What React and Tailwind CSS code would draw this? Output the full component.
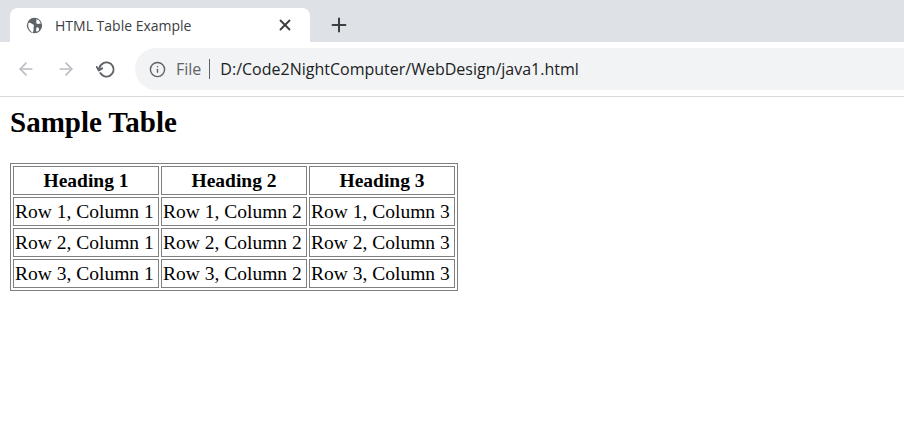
import React from 'react';
import { ArrowLeft, ArrowRight, RotateCw, X, Plus, Info } from 'lucide-react';

const rows = [1, 2, 3];
const cols = [1, 2, 3];

export default function App() {
  return (
    <div className="w-[904px] h-[434px] bg-white overflow-hidden" style={{ fontFamily: '"Open Sans", sans-serif' }}>
      {/* tab strip */}
      <div className="h-[42px] bg-[#dee1e6] flex items-end pl-[10px]">
        <div className="w-[300px] h-[34px] bg-white rounded-t-[8px] flex items-center px-[16px] gap-[12px]">
          <svg width="17" height="17" viewBox="0 0 20 20">
            <circle cx="10" cy="10" r="9" fill="#5f6368" />
            <path d="M3 7 C6 6 7 9 9 9 C10 11 8 12 9 14 C9 16 8 18 8 18.5 C5 17 3 14 2.5 10 Z M12 2.5 C13 5 11 6 13 8 C15 9 16 7 17.5 8 C17 5 15 3 12 2.5 Z M13 12 C15 12 16 14 15 16 C14 17 12 17.5 12 17 C12 15 11.5 13 13 12 Z" fill="white" />
          </svg>
          <span className="text-[14px] text-[#3c4043] flex-1">HTML Table Example</span>
          <X size={18} strokeWidth={2.5} className="text-[#3c4043]" />
        </div>
        <div className="h-[34px] flex items-center ml-[18px]">
          <Plus size={22} strokeWidth={2.2} className="text-[#3c4043]" />
        </div>
      </div>
      {/* toolbar */}
      <div className="h-[55px] bg-white border-b border-[#d7d9dc] flex items-center pl-[16px]">
        <ArrowLeft size={20} className="text-[#b9bcc0]" />
        <ArrowRight size={20} className="text-[#b9bcc0] ml-[20px]" />
        <RotateCw size={19} strokeWidth={2.4} className="text-[#5f6368] ml-[21px] -scale-x-100 rotate-[-30deg]" />
        <div className="ml-[19px] flex-1 h-[42px] bg-[#f1f3f4] rounded-l-full flex items-center pl-[14px]">
          <Info size={17} className="text-[#5f6368]" />
          <span className="ml-[10px] text-[16px] text-[#5f6368]">File</span>
          <span className="ml-[8px] w-px h-[20px] bg-[#5f6368]" />
          <span className="ml-[10px] text-[16px] text-[#202124]">D:/Code2NightComputer/WebDesign/java1.html</span>
        </div>
      </div>
      {/* page */}
      <div className="px-[10px]" style={{ fontFamily: '"Liberation Serif", serif' }}>
        <h1 className="text-[29px] font-bold leading-none mt-[11px] mb-[26px]">Sample Table</h1>
        <table className="border border-[#808080] border-separate border-spacing-[2px] text-[19.5px] leading-[25px]">
          <thead>
            <tr>
              {cols.map((c) => (
                <th key={c} className="border border-[#808080] font-bold px-[1px] py-[1px] w-[146px]">Heading {c}</th>
              ))}
            </tr>
          </thead>
          <tbody>
            {rows.map((r) => (
              <tr key={r}>
                {cols.map((c) => (
                  <td key={c} className="border border-[#808080] px-[1px] py-[1px] whitespace-nowrap">Row {r}, Column {c}</td>
                ))}
              </tr>
            ))}
          </tbody>
        </table>
      </div>
    </div>
  );
}
